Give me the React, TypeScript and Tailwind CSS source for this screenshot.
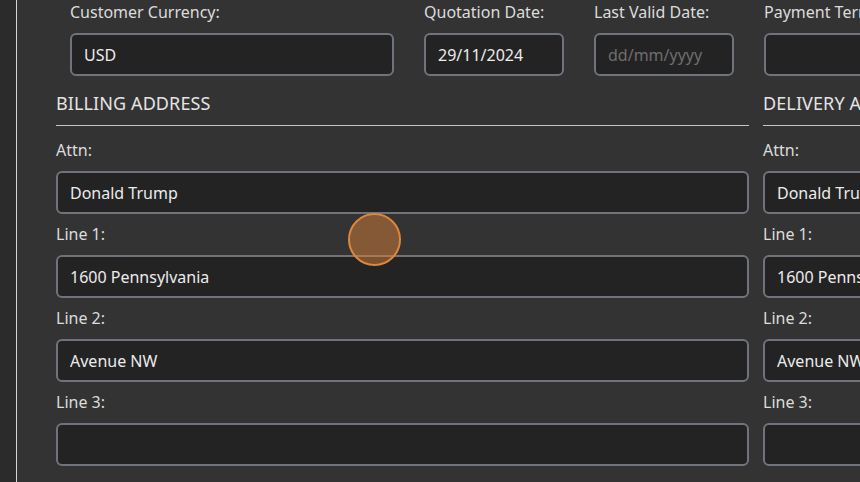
import React from 'react';

type FieldProps = {
  label: string;
  value?: string;
  placeholder?: string;
  width?: string;
};

const inputCls =
  'h-[43px] rounded-[6px] border-2 border-[#6f747c] bg-[#232323] px-3 text-[16px] text-[#ececec] placeholder:text-[#6e6e6e] outline-none';

const Field: React.FC<FieldProps> = ({ label, value, placeholder, width = 'w-full' }) => (
  <div className={`flex shrink-0 flex-col ${width}`}>
    <label className="h-[22px] text-[16px] leading-[22px] text-[#dcdcdc] whitespace-nowrap">{label}</label>
    <input
      className={`mt-[10px] ${inputCls} w-full`}
      defaultValue={value}
      placeholder={placeholder}
      readOnly
    />
  </div>
);

const AddressColumn: React.FC<{ title: string; attn: string; line1: string; line2: string }> = ({
  title,
  attn,
  line1,
  line2,
}) => (
  <div className="flex w-[693px] shrink-0 flex-col">
    {/* section heading */}
    <div className="border-b border-[#c4c4c4] pb-[10px] text-[18px] leading-[24px] tracking-[0.1px] text-[#e4e4e4] whitespace-nowrap">
      {title}
    </div>
    <div className="mt-[13px] flex flex-col gap-[9px]">
      <Field label="Attn:" value={attn} />
      <Field label="Line 1:" value={line1} />
      <Field label="Line 2:" value={line2} />
      <Field label="Line 3:" value="" />
    </div>
  </div>
);

const App: React.FC = () => {
  return (
    <div className="relative flex h-[482px] w-[860px] overflow-hidden bg-[#333333] font-['Noto_Sans',sans-serif]">
      {/* side strip */}
      <div className="w-4 shrink-0 bg-[#2b2b2b]" />
      <div className="w-px shrink-0 bg-[#d6d6d6]" />

      {/* form */}
      <div className="flex min-w-0 flex-1 flex-col pl-[39px] pt-[1px]">
        <div className="ml-[14px] flex gap-[30px]">
          <Field label="Customer Currency:" value="USD" width="w-[324px]" />
          <Field label="Quotation Date:" value="29/11/2024" width="w-[140px]" />
          <Field label="Last Valid Date:" placeholder="dd/mm/yyyy" width="w-[140px]" />
          <Field label="Payment Terms:" value="" width="w-[140px]" />
        </div>

        <div className="mt-[15px] flex gap-[14px]">
          <AddressColumn title="BILLING ADDRESS" attn="Donald Trump" line1="1600 Pennsylvania" line2="Avenue NW" />
          <AddressColumn title="DELIVERY ADDRESS" attn="Donald Trump" line1="1600 Pennsylvania" line2="Avenue NW" />
        </div>
      </div>

      {/* click indicator */}
      <div className="pointer-events-none absolute left-[348px] top-[213px] h-[53px] w-[53px] rounded-full border-2 border-[#dc873c] bg-[#d9803a]/50" />
    </div>
  );
};

export default App;
